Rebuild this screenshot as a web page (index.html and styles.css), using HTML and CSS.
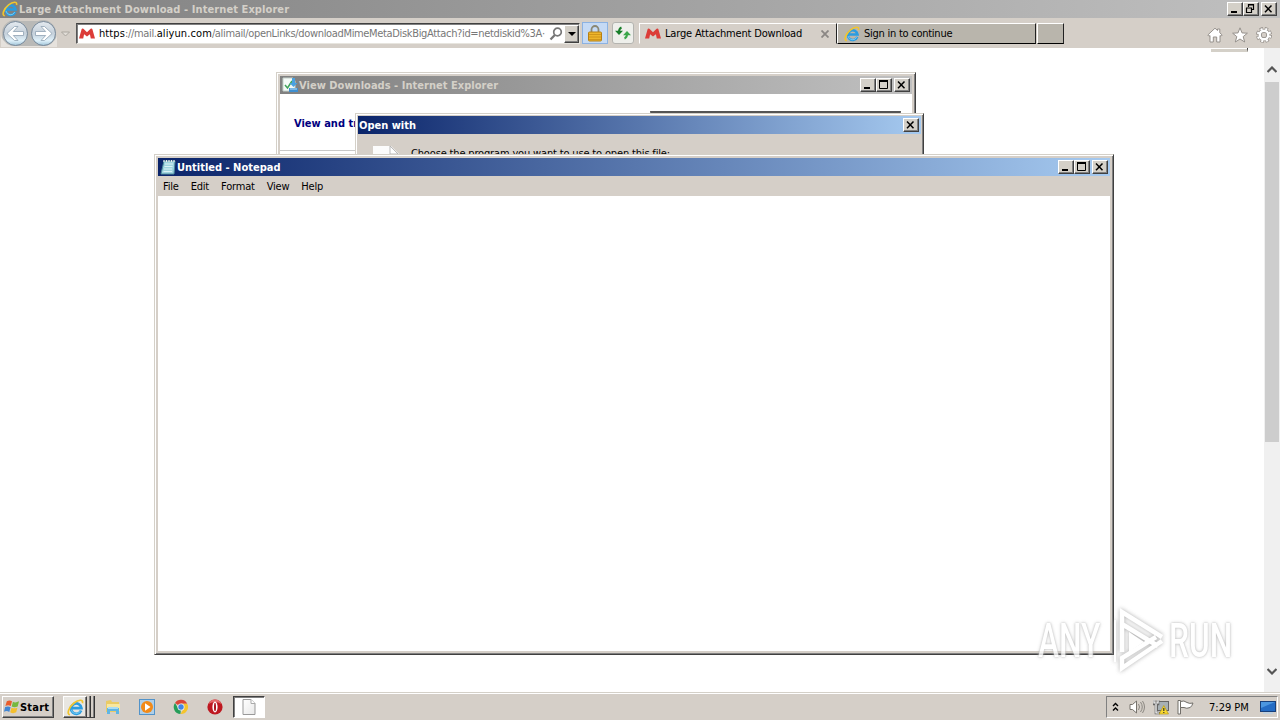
FILE: index.html
```html
<!DOCTYPE html>
<html lang="en">
<head>
    <meta charset="UTF-8">
    <meta name="viewport" content="width=device-width, initial-scale=1.0">
    <title>Large Attachment Download</title>
    <link rel="stylesheet" href="styles.css">
</head>
<body>
    <!-- shared icons -->
    <svg class="defs" width="0" height="0">
        <defs>
            <linearGradient id="ball" x1="0" y1="0" x2="0" y2="1">
                <stop offset="0" stop-color="#e4eaf0"/><stop offset=".5" stop-color="#c5d0da"/><stop offset=".8" stop-color="#dff1fa"/><stop offset="1" stop-color="#9fc3d7"/>
            </linearGradient>
            <linearGradient id="sheet" x1="0" y1="0" x2="1" y2="1">
                <stop offset="0" stop-color="#fff"/><stop offset="1" stop-color="#e8e8e8"/>
            </linearGradient>
            <symbol id="ie" viewBox="0 0 16 16">
                <path d="M13.3 10.9A4.9 4.9 0 1 1 13.6 8.6H4.4" fill="none" stroke="#2a9ce0" stroke-width="2.5"/>
                <path d="M12.8 10.9A4.6 4.6 0 0 1 4 10" fill="none" stroke="#79cef5" stroke-width=".9"/>
                <path d="M2.8 14.8C-.8 14.5 1.8 7.6 6.6 3.8C10.6 .8 15.5-.2 14.6 4" fill="none" stroke="#f1c52e" stroke-width="1.6"/>
            </symbol>
            <symbol id="mail" viewBox="0 0 16 11">
                <path d="M0 10.5L2.6 1.2Q3 .2 4.4 .8L8 4.2L11.6 .8Q13 .2 13.4 1.2L16 10.5H11.8L10.9 6.2L8 8.6L5.1 6.2L4.2 10.5Z" fill="#dc3c38"/>
            </symbol>
            <symbol id="min" viewBox="0 0 12 10"><path d="M2 8H8" stroke="#000" stroke-width="2"/></symbol>
            <symbol id="max" viewBox="0 0 12 10"><path d="M1.5 1V8.5H9.5V1M1 1H10" fill="none" stroke="#000"/><path d="M1 1H10" stroke="#000" stroke-width="2"/></symbol>
            <symbol id="restore" viewBox="0 0 12 10"><path d="M3.5 3V.5H8.5V5.5H7M3 1H9M1.5 4V8.5H6.5V4M1 4H7" fill="none" stroke="#000" stroke-width="1.2"/></symbol>
            <symbol id="close" viewBox="0 0 12 10"><path d="M2 1.5L8.5 8.2M8.5 1.5L2 8.2" stroke="#000" stroke-width="1.5"/></symbol>
        </defs>
    </svg>

    <div class="desktop">
        <header class="titlebar inactive main-title">
            <svg class="icon16"><use href="#ie"/></svg>
            <span class="title-text t-main">Large Attachment Download - Internet Explorer</span>
            <div class="controls">
                <button><svg><use href="#min"/></svg></button>
                <button><svg><use href="#restore"/></svg></button>
                <button class="close"><svg><use href="#close"/></svg></button>
            </div>
        </header>

        <nav class="toolbar">
            <svg class="nav-buttons" viewBox="0 0 74 30">
                <path d="M2 16A13 13 0 0 1 20 3H38A13 13 0 0 1 56 16V28H2Z" fill="#b9b9b7"/>
                <path d="M1 18Q5 28 15 28H43Q53 28 57 18V29H1Z" fill="#e6e2dd"/>
                <circle cx="15.5" cy="15.5" r="12" fill="url(#ball)" stroke="#78899a"/>
                <circle cx="43.5" cy="15.5" r="12" fill="url(#ball)" stroke="#78899a"/>
                <g fill="#fff" stroke="#98aaba" stroke-width=".9">
                    <path d="M7 15.5L14.5 8.5H18L13.3 13.5H23.5V17.5H13.3L18 22.5H14.5Z"/>
                    <path d="M52 15.5L44.5 8.5H41L45.7 13.5H35.5V17.5H45.7L41 22.5H44.5Z"/>
                </g>
                <path d="M61.5 14H69.5L65.5 18Z" fill="#e2ded8" stroke="#aaa69f"/>
            </svg>
            <div class="address">
                <svg class="mail"><use href="#mail"/></svg>
                <span class="url"><b class="scheme">https</b>://mail.<b>aliyun.com</b>/alimail/openLinks/downloadMimeMetaDiskBigAttach?id=netdiskid%3A·</span>
                <svg class="search" viewBox="0 0 14 14"><circle cx="8.5" cy="5" r="3.8" fill="#fff" stroke="#777" stroke-width="1.7"/><path d="M5.8 8L1.5 12.5" stroke="#777" stroke-width="2.3"/></svg>
                <button class="drop"><svg viewBox="0 0 8 4"><path d="M0 0H8L4 4Z"/></svg></button>
            </div>
            <div class="lock">
                <svg viewBox="0 0 14 17"><path d="M3.5 8V4.5A3.5 3.5 0 0 1 10.5 4.5V8" fill="none" stroke="#8b8874" stroke-width="1.8"/><rect x=".5" y="7" width="13" height="9" rx="1" fill="#edb52c" stroke="#b78013"/><path d="M1 9.5H13M1 12H13M1 14.5H13" stroke="#c88e17" stroke-width=".8"/></svg>
            </div>
            <div class="refresh">
                <svg viewBox="0 0 16 14"><path d="M6.5 1.5Q4 2.5 4 6" fill="none" stroke="#187e29" stroke-width="2"/><path d="M0 4.8H8L4 9Z" fill="#187e29"/><path d="M9.5 12.5Q12 11.5 12 8" fill="none" stroke="#3ba64a" stroke-width="2"/><path d="M8 9.2H16L12 5Z" fill="#3ba64a"/></svg>
            </div>
            <div class="tab active">
                <svg class="mail"><use href="#mail"/></svg>
                <span class="tab-label-a">Large Attachment Download</span>
                <svg class="tab-close" viewBox="0 0 8 8"><path d="M.5 .5L7.5 7.5M7.5 .5L.5 7.5" stroke="#8b8784" stroke-width="1.8"/></svg>
            </div>
            <div class="tab">
                <svg class="icon16"><use href="#ie"/></svg>
                <span class="tab-label-b">Sign in to continue</span>
            </div>
            <div class="tab new-tab"></div>
            <div class="tools">
                <svg viewBox="0 0 16 16"><path d="M.8 8L8 1.2L10.5 3.5V2H12.8V5.8L15.2 8L14 9.3L13 8.5V15H9.7V10H6.3V15H3V8.5L2 9.3Z" fill="#fff" stroke="#96918c"/></svg>
                <svg viewBox="0 0 16 16"><path d="M8 .8L10 5.9L15.4 6.2L11.2 9.6L12.7 15L8 12L3.3 15L4.8 9.6L.6 6.2L6 5.9Z" fill="#fff" stroke="#96918c"/></svg>
                <svg viewBox="0 0 16 16"><circle cx="8" cy="8" r="6.4" fill="none" stroke="#96918c" stroke-width="3.2" stroke-dasharray="3.2 1.83"/><circle cx="8" cy="8" r="4.3" fill="none" stroke="#96918c" stroke-width="4"/><circle cx="8" cy="8" r="6.2" fill="none" stroke="#fff" stroke-width="2" stroke-dasharray="2 2.87" stroke-dashoffset="-.6"/><circle cx="8" cy="8" r="4.3" fill="none" stroke="#fff" stroke-width="2.4"/></svg>
            </div>
        </nav>

        <main class="page">
            <div class="page-body"><div class="page-edge"></div></div>
            <div class="scrollbar">
                <svg viewBox="0 0 10 7"><path d="M.5 6L5 1.5L9.5 6" fill="none" stroke="#555" stroke-width="2.2"/></svg>
                <div class="thumb"></div>
                <svg class="down" viewBox="0 0 10 7"><path d="M.5 1L5 5.5L9.5 1" fill="none" stroke="#555" stroke-width="2.2"/></svg>
            </div>
        </main>

        <footer class="taskbar">
            <div class="start">
                <svg viewBox="0 0 17 16"><path d="M3 2Q6 0 8.5 2L7.2 7Q4.5 5.5 1.5 7Z" fill="#e95c2b"/><path d="M9.5 2.5Q12 4 16 2L14.5 7.5Q11 9 8.2 7.5Z" fill="#76b83e"/><path d="M1.2 8Q4.5 6.7 7 8.2L5.6 13.2Q3 11.6 0 13Z" fill="#4186d3"/><path d="M8 8.7Q11 10 14.2 8.7L13 13.7Q9.7 15.5 6.6 13.6Z" fill="#f4bf2d"/></svg>
                <span>Start</span>
            </div>
            <div class="task-ie">
                <div class="layer"><svg><use href="#ie"/></svg></div>
                <i></i><i></i>
            </div>
            <div class="pinned">
                <svg viewBox="0 0 16 16"><path d="M1 2L6 1L7 3H14V13H1Z" fill="#eacb65"/><path d="M2 5H15V12H2Z" fill="#f8e7a0"/><path d="M2 15V9H14V15H11V12H5V15Z" fill="#5fb5e4"/><path d="M3 9H13" stroke="#a8dcf4" stroke-width="2"/></svg>
                <svg viewBox="0 0 16 16"><rect x=".5" y=".5" width="15" height="15" fill="#afcfe8" stroke="#5293c9"/><circle cx="8" cy="8" r="6" fill="#f28a18"/><path d="M6 4.3L11.5 8L6 11.7Z" fill="#fff"/></svg>
                <svg viewBox="0 0 16 16"><path d="M8 8L2 4A7 7 0 0 1 14.2 4.7H8Z" fill="#db4437"/><path d="M8 8L7.5 15A7 7 0 0 1 2 4L5 9Z" fill="#269d59"/><path d="M8 8V4.7H14.2A7 7 0 0 1 7.5 15L11 9Z" fill="#f5c42c"/><circle cx="8" cy="8" r="3.5" fill="#eee"/><circle cx="8" cy="8" r="2.7" fill="#4285e5"/></svg>
                <svg viewBox="0 0 16 16"><circle cx="8" cy="8" r="7.6" fill="#be1820"/><path d="M1.5 5A7 7 0 0 1 14.5 5Q8 1 1.5 5" fill="#e46969"/><ellipse cx="8" cy="8" rx="2.6" ry="5.4" fill="#fff"/><ellipse cx="8" cy="8" rx="1" ry="4.3" fill="#a91119"/></svg>
            </div>
            <div class="task-file">
                <svg viewBox="0 0 14 16"><path d="M1 .5H9L13 4.5V15.5H1Z" fill="url(#sheet)" stroke="#999"/><path d="M9 .5V4.5H13" fill="#fff" stroke="#aaa"/></svg>
            </div>
            <div class="tray">
                <svg class="chev" viewBox="0 0 7 10"><path d="M1 4L3.5 1.5L6 4M1 8.5L3.5 6L6 8.5" fill="none" stroke="#000" stroke-width="1.4"/></svg>
                <svg class="sound" viewBox="0 0 16 16"><path d="M1 5.5H3.5L7.5 2V14L3.5 10.5H1Z" fill="#fff" stroke="#77736d"/><path d="M9.5 5Q11.5 8 9.5 11M11.5 3Q15 8 11.5 13M13.5 2Q17.5 8 13.5 14" fill="none" stroke="#8b8781"/></svg>
                <svg class="network" viewBox="0 0 16 16"><rect x="4.5" y="2.5" width="11" height="9" fill="#a7b0b5" stroke="#666"/><path d="M1 1V5H5V1M3 5V14H7M1 4H5" fill="none" stroke="#666" stroke-width="2.6"/><path d="M1 1V4H5V1M3 5V14H6" fill="none" stroke="#fff" stroke-width="1.2"/><path d="M10.8 6.5L15.5 15H6.2Z" fill="#f7d82f" stroke="#b89a17" stroke-width=".7"/><path d="M10.8 9V12M10.8 13V14" stroke="#333" stroke-width="1.2"/></svg>
                <svg class="flag" viewBox="0 0 17 16"><path d="M1 1.5H3.5V15H1Z" fill="#fff" stroke="#716e69"/><path d="M3.5 2.5Q7 1 10 3.5Q12.5 5 16 4Q15 7 13.2 8.5Q9.5 10 7 8.5L3.5 8.5Z" fill="#fff" stroke="#716e69"/></svg>
                <span class="clock">7:29 PM</span>
                <svg class="show-desktop" viewBox="0 0 16 13"><rect x=".5" y=".5" width="15" height="10" fill="#246cc4" stroke="#173f7a"/><path d="M1 1H15L1 7Z" fill="#4b96df"/><path d="M3 12H13" stroke="#b8d0e4" stroke-width="1.5"/></svg>
            </div>
        </footer>

        <section class="window downloads">
            <header class="titlebar inactive">
                <svg class="icon16" viewBox="0 0 16 16"><path d="M1 1H11L13 4V14H1Z" fill="#f4faf7" stroke="#c3d0ca"/><path d="M3 8L5.5 11L10 4" fill="none" stroke="#40a35a" stroke-width="1.5"/><path d="M10 1H13V6H15.5L11.5 10L7.5 6H10Z" fill="#4aa1df"/><path d="M7 11H16V15H7Z" fill="#3f8fd0"/><path d="M8 12H15" stroke="#bfe0f5"/></svg>
                <span class="title-text t-down">View Downloads - Internet Explorer</span>
                <div class="controls">
                    <button><svg><use href="#min"/></svg></button>
                    <button><svg><use href="#max"/></svg></button>
                    <button class="close"><svg><use href="#close"/></svg></button>
                </div>
            </header>
            <div class="downloads-body">
                <div class="downloads-head">
                    <strong>View and tr</strong>
                    <div class="search-box"></div>
                </div>
            </div>
        </section>

        <section class="window open-with">
            <header class="titlebar">
                <span class="title-text t-open">Open with</span>
                <div class="controls"><button class="close"><svg><use href="#close"/></svg></button></div>
            </header>
            <div class="open-body">
                <svg viewBox="0 0 26 32"><path d="M0 0H18L26 8V32H0Z" fill="#fcfcfc"/><path d="M17 0L25 8H17Z" fill="#fff" stroke="#aaa" stroke-width=".8"/></svg>
                <span>Choose the program you want to use to open this file:</span>
            </div>
        </section>

        <section class="window notepad">
            <header class="titlebar">
                <svg class="icon16" viewBox="0 0 16 16"><path d="M4 2H15L14 15H1Z" fill="#9fd4df" stroke="#4d8c9d"/><path d="M5 5H13M4.5 7.5H12.5M4 10H12M3.5 12.5H12" stroke="#d9f2f5"/><path d="M4 1V3M6.5 1V3M9 1V3M11.5 1V3M14 1V3" stroke="#eee" stroke-width="1.2"/></svg>
                <span class="title-text t-note">Untitled - Notepad</span>
                <div class="controls">
                    <button><svg><use href="#min"/></svg></button>
                    <button><svg><use href="#max"/></svg></button>
                    <button class="close"><svg><use href="#close"/></svg></button>
                </div>
            </header>
            <div class="menu"><span>File</span><span>Edit</span><span>Format</span><span>View</span><span>Help</span></div>
            <div class="editor"></div>
        </section>

        <div class="watermark">
            <span>ANY</span>
            <svg viewBox="0 0 58 66">
                <path d="M14 44V4L54 29M14 16L50 38M54 33L14 60V50L48 29" fill="none" stroke="#fff" stroke-width="4.5"/>
                <path d="M21 24V44L36 34Z" fill="#fff"/>
                <path d="M7 12V54" stroke="#fff" stroke-width="2"/>
            </svg>
            <span class="run">RUN</span>
        </div>
    </div>
</body>
</html>
```
FILE: styles.css
```css
* {
    margin: 0;
    padding: 0;
    box-sizing: border-box;
}

body {
    width: 1280px;
    height: 720px;
    overflow: hidden;
    background: #fff;
    color: #000;
    font-family: Tahoma, "DejaVu Sans Condensed", "DejaVu Sans", sans-serif;
    font-stretch: condensed;
    font-size: 11px;
    line-height: 14px;
    white-space: nowrap;
}

svg {
    display: block;
    flex-shrink: 0;
}

.defs {
    position: absolute;
}

.desktop {
    position: relative;
    width: 1280px;
    height: 720px;
    display: flex;
    flex-direction: column;
}

.icon16 {
    width: 16px;
    height: 16px;
}

/* title bars */
.titlebar {
    height: 18px;
    flex-shrink: 0;
    display: flex;
    align-items: center;
    padding: 0 2px;
    background: linear-gradient(to right, #0a246a, #a6caf0);
    color: #fff;
}

.titlebar.inactive {
    background: linear-gradient(to right, #808080, #c0c0c0);
    color: #d4d0c8;
}

.main-title {
    padding-right: 3px;
}

.title-text {
    padding-top: 1px;
    font-weight: bold;
}

.t-main {
    margin-left: 1px;
    letter-spacing: .09px;
}

.t-down {
    margin-left: 1px;
    letter-spacing: .03px;
}

.t-note { margin-left: 1px; }

.controls {
    margin-left: auto;
    display: flex;
}

.controls button {
    width: 16px;
    height: 14px;
    background: #d4d0c8;
    border: 1px solid;
    border-color: #fff #404040 #404040 #fff;
    box-shadow: inset -1px -1px #808080;
}

.controls button svg {
    width: 12px;
    height: 10px;
    margin: 1px;
}

.controls .close {
    margin-left: 2px;
}

.controls .close:first-child {
    margin-left: 0;
}

/* browser toolbar */
.toolbar {
    height: 30px;
    flex-shrink: 0;
    display: flex;
    background: #d5cfc8;
}

.nav-buttons {
    width: 74px;
    height: 30px;
    margin-right: 2px;
}

.address {
    width: 504px;
    height: 21px;
    margin-top: 5px;
    display: flex;
    align-items: center;
    background: #fff;
    border: 1px solid;
    border-color: #404040 #e7e5df #e7e5df #555;
    box-shadow: inset 1px 1px #808080;
    padding-left: 2px;
}

.mail {
    width: 16px;
    height: 11px;
}

.url {
    width: 447px;
    margin-left: 4px;
    padding-top: 1px;
    overflow: hidden;
    color: #777;
    letter-spacing: -.34px;
}

.url b {
    font-weight: normal;
    color: #000;
    letter-spacing: .1px;
}

.search {
    width: 14px;
    height: 14px;
    margin-left: 3px;
}

.drop {
    width: 15px;
    height: 18px;
    margin-left: auto;
    background: #d4d0c8;
    border: 1px solid;
    border-color: #fff #404040 #404040 #fff;
    box-shadow: inset -1px -1px #808080;
}

.drop svg {
    width: 8px;
    height: 4px;
    margin: 0 auto;
}

.lock,
.refresh {
    height: 22px;
    margin-top: 4px;
    display: flex;
    align-items: center;
    justify-content: center;
}

.lock {
    width: 26px;
    margin-left: 2px;
    background: #c5daf5;
    border: 1px solid #8cb2e2;
}

.lock svg {
    width: 14px;
    height: 17px;
}

.refresh {
    width: 22px;
    margin-left: 4px;
    background: #eeefeb;
    border: 1px solid #b4b4b0;
    border-radius: 3px;
}

.refresh svg {
    width: 16px;
    height: 14px;
}

.tab {
    width: 199px;
    height: 21px;
    margin-top: 5px;
    display: flex;
    align-items: center;
    background: #b9b5ac;
    border: 1px solid;
    border-color: #fff #222 #000 #fff;
    padding-left: 6px;
}

.tab.active {
    width: 198px;
    margin-left: 5px;
    background: #d5cfc8;
    border-color: #fff #222 #d5cfc8 #fff;
    padding-left: 5px;
}

.tab span {
    margin-left: 4px;
    padding-top: 1px;
}

.tab-label-a {
    letter-spacing: -.17px;
}

.tab-label-b {
    letter-spacing: -.25px;
}

.tab-close {
    width: 8px;
    height: 8px;
    margin-left: auto;
    margin-right: 7px;
}

.tab.new-tab {
    width: 27px;
    margin-left: 1px;
}

.tools {
    margin: 9px 8px 0 auto;
    display: flex;
    gap: 8.5px;
}

.tools svg {
    width: 16px;
    height: 16px;
}

/* page behind the windows */
.page {
    flex: 1;
    display: flex;
}

.page-body {
    flex: 1;
    padding-left: 1211px;
}

.page-edge {
    width: 37px;
    height: 4px;
    border-bottom: 3px solid #d4d0c8;
    border-right: 1px solid #404040;
}

.scrollbar {
    width: 16px;
    background: #f0f0f0;
    display: flex;
    flex-direction: column;
    align-items: center;
    padding: 18px 1px 17px;
}

.scrollbar svg {
    width: 10px;
    height: 7px;
}

.thumb {
    width: 14px;
    height: 360px;
    margin-top: 9px;
    background: #cdcdcd;
}

.scrollbar .down {
    margin-top: auto;
}

/* taskbar */
.taskbar {
    height: 28px;
    background: #d5cfc8;
    border-top: 1px solid #d4d0c8;
    box-shadow: inset 0 1px #fff;
    display: flex;
    padding-top: 3px;
}

.start,
.task-ie .layer {
    height: 22px;
    display: flex;
    align-items: center;
    border: 1px solid;
    border-color: #fff #404040 #404040 #fff;
    box-shadow: inset -1px -1px #808080;
}

.start {
    width: 52px;
    margin-left: 2px;
    padding-left: 1px;
    font-weight: bold;
    letter-spacing: .2px;
}

.start svg {
    width: 16px;
    height: 16px;
}

.start span {
    padding-top: 1px;
}

.task-ie {
    width: 32px;
    margin-left: 9px;
    display: flex;
}

.task-ie .layer {
    width: 24px;
    padding-left: 3px;
    background: #e8e6e1;
}

.task-ie .layer svg {
    width: 17px;
    height: 17px;
}

.task-ie i {
    width: 4px;
    height: 22px;
    border-right: 1px solid #333;
    border-bottom: 1px solid #404040;
    box-shadow: inset -1px 0 #808080;
}

.pinned {
    margin: 3px 0 0 10px;
    display: flex;
    gap: 18px;
}

.pinned svg {
    width: 16px;
    height: 16px;
}

.task-file {
    width: 32px;
    height: 22px;
    margin-left: 10px;
    background: #fff;
    border: 1px solid;
    border-color: #404040 #fff #fff #404040;
    box-shadow: inset 1px 1px #808080;
    padding: 2px 0 0 8px;
}

.task-file svg {
    width: 14px;
    height: 16px;
}

.tray {
    width: 172px;
    height: 22px;
    margin: 0 2px 0 auto;
    display: flex;
    align-items: center;
    border: 1px solid;
    border-color: #808080 #fff #fff #808080;
    padding-left: 5px;
}

.chev { width: 7px; height: 10px; }
.sound { width: 16px; height: 16px; margin-left: 10px; }
.network { width: 16px; height: 16px; margin-left: 8px; }
.flag { width: 17px; height: 16px; margin-left: 8px; }
.clock { width: 40px; margin-left: 15px; padding-top: 1px; }
.show-desktop { width: 16px; height: 13px; margin-left: 11px; }

/* floating windows */
.window {
    position: absolute;
    display: flex;
    flex-direction: column;
    background: #d5cfc8;
    border: 1px solid;
    border-color: #d4d0c8 #404040 #404040 #d4d0c8;
    box-shadow: inset 1px 1px #fff, inset -1px -1px #808080;
    padding: 3px;
}

.downloads {
    left: 276px;
    top: 72px;
    width: 640px;
    height: 100px;
}

.downloads-body {
    flex: 1;
    background: #fff;
}

.downloads-head {
    height: 57px;
    display: flex;
    padding: 17px 11px 0 14px;
    border-bottom: 1px solid #c8c8c8;
    color: #000080;
    overflow: hidden;
}

.downloads-head strong {
    margin-top: 6px;
}

.search-box {
    width: 251px;
    height: 22px;
    margin-left: auto;
    border: 1px solid #808080;
    border-top: 2px solid #555;
}

.open-with {
    left: 355px;
    top: 113px;
    width: 569px;
    height: 70px;
    padding: 2px;
}

.open-with .titlebar {
    padding: 0 2px 0 1px;
}

.open-body {
    display: flex;
    padding: 12px 0 0 15px;
}

.open-body svg {
    width: 26px;
    height: 32px;
}

.open-body span {
    margin-left: 12px;
    padding-top: 1px;
    letter-spacing: -.16px;
}

.notepad {
    left: 154px;
    top: 154px;
    width: 960px;
    height: 501px;
}

.menu {
    height: 20px;
    display: flex;
    align-items: center;
    gap: 12px;
    padding: 1px 0 0 5px;
    letter-spacing: -.2px;
}

.editor {
    flex: 1;
    background: #fff;
}

/* overlay logo */
.watermark {
    position: absolute;
    left: 1038px;
    top: 607px;
    width: 198px;
    height: 68px;
    display: flex;
    align-items: center;
    color: #fff;
    font-family: Roboto, "Liberation Sans", sans-serif;
    font-stretch: normal;
    font-weight: 500;
    font-size: 48px;
    line-height: 60px;
    text-shadow: 0 0 4px #aaa, 0 0 2px #ccc;
    opacity: .8;
}

.watermark span {
    width: 70px;
    transform: scaleX(.66);
    transform-origin: left center;
}

.watermark svg {
    width: 58px;
    height: 66px;
    filter: drop-shadow(0 0 2px #999);
}

.watermark .run {
    margin-left: 3px;
}
```
